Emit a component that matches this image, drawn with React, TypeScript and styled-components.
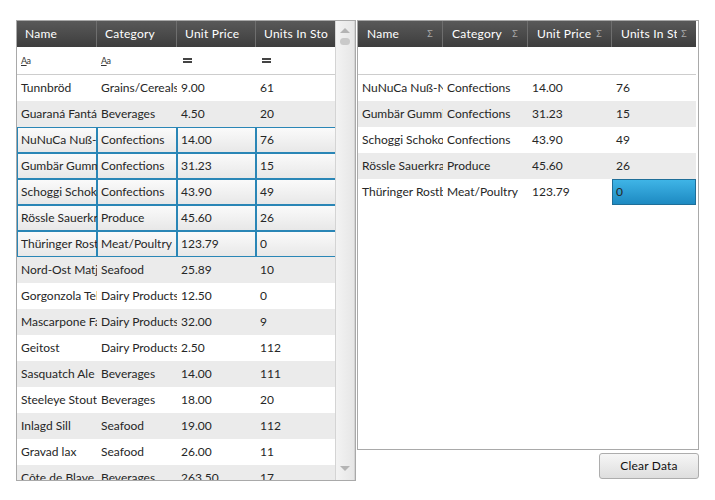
import React from "react";
import styled, { createGlobalStyle, css } from "styled-components";

const GlobalStyle = createGlobalStyle`
  html, body { margin: 0; padding: 0; background: #ffffff; }
  body { font-family: Lato, "Open Sans", "Liberation Sans", sans-serif; font-size: 12px; color: #262626; }
`;

type Product = { name: string; category: string; price: string; stock: string };

const products: Product[] = [
  { name: "Tunnbröd", category: "Grains/Cereals", price: "9.00", stock: "61" },
  { name: "Guaraná Fantástica", category: "Beverages", price: "4.50", stock: "20" },
  { name: "NuNuCa Nuß-Nougat-Creme", category: "Confections", price: "14.00", stock: "76" },
  { name: "Gumbär Gummibärchen", category: "Confections", price: "31.23", stock: "15" },
  { name: "Schoggi Schokolade", category: "Confections", price: "43.90", stock: "49" },
  { name: "Rössle Sauerkraut", category: "Produce", price: "45.60", stock: "26" },
  { name: "Thüringer Rostbratwurst", category: "Meat/Poultry", price: "123.79", stock: "0" },
  { name: "Nord-Ost Matjeshering", category: "Seafood", price: "25.89", stock: "10" },
  { name: "Gorgonzola Telino", category: "Dairy Products", price: "12.50", stock: "0" },
  { name: "Mascarpone Fabioli", category: "Dairy Products", price: "32.00", stock: "9" },
  { name: "Geitost", category: "Dairy Products", price: "2.50", stock: "112" },
  { name: "Sasquatch Ale", category: "Beverages", price: "14.00", stock: "111" },
  { name: "Steeleye Stout", category: "Beverages", price: "18.00", stock: "20" },
  { name: "Inlagd Sill", category: "Seafood", price: "19.00", stock: "112" },
  { name: "Gravad lax", category: "Seafood", price: "26.00", stock: "11" },
  { name: "Côte de Blaye", category: "Beverages", price: "263.50", stock: "17" },
];

const selected = [2, 3, 4, 5, 6];
const leftCols = [80, 80, 79, 81];
const rightCols = [85, 85, 84, 84];
const headers = ["Name", "Category", "Unit Price", "Units In Stock"];

const Page = styled.div`
  display: flex;
  gap: 1px;
  padding: 20px 0 0 16px;
  align-items: flex-start;
`;

const LeftGrid = styled.div`
  box-sizing: border-box;
  width: 340px;
  height: 461px;
  border: 1px solid #a9a9a9;
  display: flex;
  overflow: hidden;
`;

const TableArea = styled.div`
  width: 320px;
  display: flex;
  flex-direction: column;
  overflow: hidden;
`;

const HeaderRow = styled.div`
  display: flex;
  height: 26px;
  flex: none;
  background: linear-gradient(#595959, #3d3d3d);
`;

const HeaderCell = styled.div<{ $w: number; $pad: number }>`
  box-sizing: border-box;
  width: ${(p) => p.$w}px;
  flex: none;
  display: flex;
  align-items: center;
  padding: 0 9px 2px ${(p) => p.$pad}px;
  color: #ffffff;
  font-size: 12px;
  letter-spacing: 0.25px;
  white-space: nowrap;
  overflow: hidden;
  border-right: 1px solid #6e6e6e;
  &:last-child { border-right: none; }
`;

const HeaderText = styled.span`
  flex: 1;
  overflow: hidden;
  white-space: nowrap;
`;

const Sigma = styled.span`
  flex: none;
  color: #a8a8a8;
  font-size: 9px;
  margin-left: 4px;
`;

const FilterRow = styled.div`
  display: flex;
  height: 27px;
  flex: none;
  border-bottom: 1px solid #cdcdcd;
  background: #ffffff;
`;

const FilterCell = styled.div<{ $w: number }>`
  box-sizing: border-box;
  width: ${(p) => p.$w}px;
  flex: none;
  display: flex;
  align-items: center;
  padding-left: 4px;
`;

const TextFilterIcon = styled.span`
  font-size: 9px;
  color: #333;
  letter-spacing: -0.5px;
  & > u { text-decoration: underline; text-underline-offset: 1px; }
`;

const EqualsIcon = styled.span`
  display: inline-block;
  margin-left: 2px;
  width: 9px;
  height: 5px;
  border-top: 2px solid #444;
  border-bottom: 2px solid #444;
  box-sizing: border-box;
`;

const DataRow = styled.div<{ $alt: boolean }>`
  display: flex;
  height: 26px;
  flex: none;
  background: ${(p) => (p.$alt ? "#ebebeb" : "#ffffff")};
`;

const DataCell = styled.div<{ $w: number; $sel?: boolean; $current?: boolean }>`
  box-sizing: border-box;
  width: ${(p) => p.$w}px;
  flex: none;
  display: flex;
  align-items: center;
  padding: 0 0 2px 4px;
  white-space: nowrap;
  overflow: hidden;
  color: #262626;
  ${(p) =>
    p.$sel &&
    css`
      background: linear-gradient(#fbfbfb, #e7e7e7);
      box-shadow: inset 0 0 0 1px #2a86b6;
    `}
  ${(p) =>
    p.$current &&
    css`
      background: linear-gradient(#40b6e8, #1c88c0);
      box-shadow: inset 0 0 0 1px #1f6e98;
    `}
`;

const ScrollBar = styled.div`
  width: 18px;
  flex: none;
  display: flex;
  flex-direction: column;
  align-items: center;
  background: linear-gradient(to right, #f3f3f3, #e6e6e6);
  border-left: 1px solid #d4d4d4;
  border-right: 1px solid #d4d4d4;
`;

const ArrowUp = styled.div`
  margin-top: 7px;
  width: 0;
  height: 0;
  border-left: 5px solid transparent;
  border-right: 5px solid transparent;
  border-bottom: 5px solid #b4b4b4;
`;

const Thumb = styled.div`
  margin-top: 5px;
  width: 10px;
  height: 7px;
  border-radius: 4px;
  background: #c9c9c9;
`;

const ScrollTrack = styled.div`
  flex: 1;
`;

const ArrowDown = styled.div`
  margin-bottom: 9px;
  width: 0;
  height: 0;
  border-left: 5px solid transparent;
  border-right: 5px solid transparent;
  border-top: 5px solid #b4b4b4;
`;

const RightColumn = styled.div`
  width: 342px;
  display: flex;
  flex-direction: column;
`;

const RightGrid = styled.div`
  box-sizing: border-box;
  height: 430px;
  border: 1px solid #a9a9a9;
  padding-right: 2px;
  display: flex;
  flex-direction: column;
  overflow: hidden;
`;

const ButtonRow = styled.div`
  display: flex;
  justify-content: flex-end;
  padding-top: 3px;
`;

const Button = styled.button`
  box-sizing: border-box;
  width: 100px;
  height: 26px;
  border: 1px solid #adadad;
  border-radius: 3px;
  background: linear-gradient(#f6f6f6, #dedede);
  font-family: Lato, "Open Sans", "Liberation Sans", sans-serif;
  font-size: 12px;
  letter-spacing: 0.2px;
  color: #111111;
  padding: 0 0 1px;
`;

const rightRows = selected.map((i) => products[i]);

export default function App() {
  return (
    <>
      <GlobalStyle />
      <Page>
        <LeftGrid>
          <TableArea>
            <HeaderRow>
              {headers.map((h, i) => (
                <HeaderCell key={h} $w={leftCols[i]} $pad={8}>
                  <HeaderText>{h}</HeaderText>
                </HeaderCell>
              ))}
            </HeaderRow>
            <FilterRow>
              <FilterCell $w={leftCols[0]}>
                <TextFilterIcon>
                  <u>A</u>a
                </TextFilterIcon>
              </FilterCell>
              <FilterCell $w={leftCols[1]}>
                <TextFilterIcon>
                  <u>A</u>a
                </TextFilterIcon>
              </FilterCell>
              <FilterCell $w={leftCols[2]}>
                <EqualsIcon />
              </FilterCell>
              <FilterCell $w={leftCols[3]}>
                <EqualsIcon />
              </FilterCell>
            </FilterRow>
            {products.map((p, i) => {
              const sel = selected.includes(i);
              return (
                <DataRow key={p.name} $alt={i % 2 === 1}>
                  {[p.name, p.category, p.price, p.stock].map((v, c) => (
                    <DataCell key={c} $w={leftCols[c]} $sel={sel}>
                      {v}
                    </DataCell>
                  ))}
                </DataRow>
              );
            })}
          </TableArea>
          <ScrollBar>
            <ArrowUp />
            <Thumb />
            <ScrollTrack />
            <ArrowDown />
          </ScrollBar>
        </LeftGrid>
        <RightColumn>
          <RightGrid>
            <HeaderRow>
              {headers.map((h, i) => (
                <HeaderCell key={h} $w={rightCols[i]} $pad={9}>
                  <HeaderText>{h}</HeaderText>
                  <Sigma>Σ</Sigma>
                </HeaderCell>
              ))}
            </HeaderRow>
            <FilterRow />
            {rightRows.map((p, i) => (
              <DataRow key={p.name} $alt={i % 2 === 1}>
                {[p.name, p.category, p.price, p.stock].map((v, c) => (
                  <DataCell
                    key={c}
                    $w={rightCols[c]}
                    $current={i === rightRows.length - 1 && c === 3}
                  >
                    {v}
                  </DataCell>
                ))}
              </DataRow>
            ))}
          </RightGrid>
          <ButtonRow>
            <Button>Clear Data</Button>
          </ButtonRow>
        </RightColumn>
      </Page>
    </>
  );
}
